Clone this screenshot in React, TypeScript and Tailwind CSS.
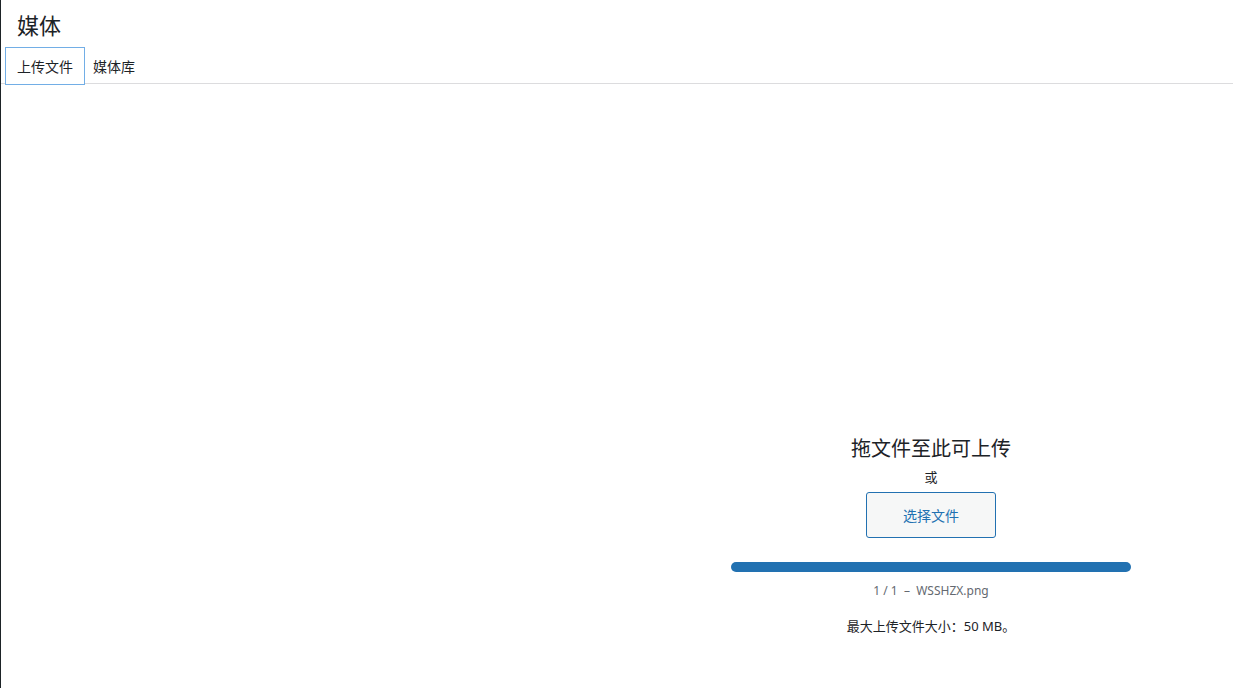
import React from "react";

const font = "font-['Noto_Sans','Noto_Sans_CJK_SC',sans-serif]";

export default function App() {
  return (
    <div className={`${font} h-[688px] w-[1233px] overflow-hidden border-l border-[#1d2327] bg-white text-[#1d2327]`}>
      <h1 className="px-[16px] pt-[8px] text-[22px] leading-[34px]">媒体</h1>

      <div className="flex h-[42px] items-start border-b border-[#dcdcde] pl-[4px] pt-[5px] text-[14px]">
        <div className="relative flex h-[38px] w-[80px] items-center justify-center border border-[#72aee6] bg-white">
          上传文件
        </div>
        <div className="flex h-[38px] items-center px-[8px]">媒体库</div>
      </div>

      <div className="grid grid-cols-[628px_1fr]">
        <div />
        <div className="flex flex-col items-center pt-[351px]">
          <p className="text-[20px] leading-[28px]">拖文件至此可上传</p>
          <p className="mt-[5px] text-[13px] leading-[18px]">或</p>
          <button className="mt-[6px] flex h-[46px] w-[130px] items-center justify-center rounded-[3px] border border-[#2271b1] bg-[#f6f7f7] text-[14px] text-[#2271b1]">
            选择文件
          </button>
          <div className="mt-[24px] h-[10px] w-[400px] rounded-full bg-[#2271b1]" />
          <p className="mt-[11px] text-[12px] leading-[16px] text-[#646970]">
            1 / 1 &nbsp;–&nbsp; WSSHZX.png
          </p>
          <p className="mt-[18px] text-[13px] leading-[18px]">最大上传文件大小：50 MB。</p>
        </div>
      </div>
    </div>
  );
}
